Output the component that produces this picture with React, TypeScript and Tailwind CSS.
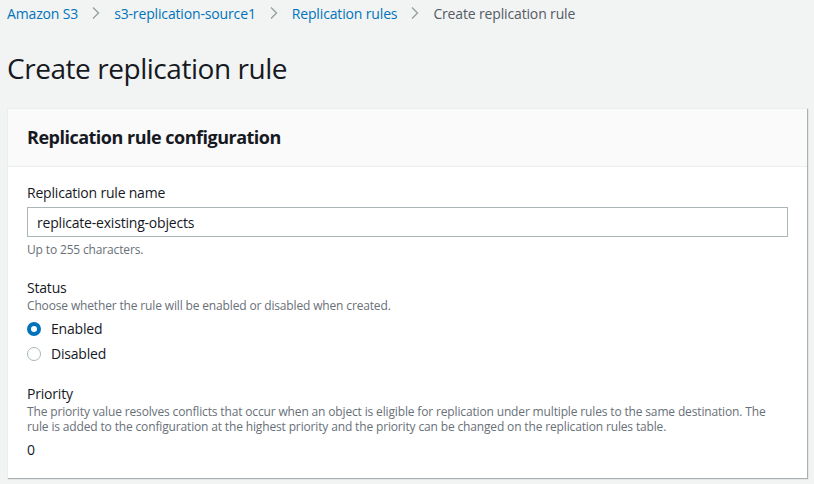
import React from "react";

const Chevron: React.FC = () => (
  <svg width="16" height="16" viewBox="0 0 16 16" className="mx-[10px] shrink-0">
    <path d="M5 2.5l5.5 5.5-5.5 5.5" fill="none" stroke="#95a1a2" strokeWidth="1.4" />
  </svg>
);

const Radio: React.FC<{ checked?: boolean; label: string }> = ({ checked, label }) => (
  <label className="flex items-center h-[25px]">
    {checked ? (
      <span className="w-[14px] h-[14px] rounded-full border-[4px] border-[#0073bb] bg-white" />
    ) : (
      <span className="w-[14px] h-[14px] rounded-full border border-[#aab7b8] bg-white" />
    )}
    <span className="ml-[10px] text-[14px] tracking-[-0.2px] text-[#16191f]">{label}</span>
  </label>
);

export default function App() {
  return (
    <div
      className="min-h-[484px] bg-[#f2f3f3] px-[7px] pb-[6px]"
      style={{ fontFamily: '"Open Sans", "Noto Sans", Arial, sans-serif' }}
    >
      {/* breadcrumbs */}
      <nav className="flex items-center h-[26px] text-[14px] tracking-[-0.15px]">
        <a className="text-[#0073bb]">Amazon S3</a>
        <Chevron />
        <a className="text-[#0073bb]">s3-replication-source1</a>
        <Chevron />
        <a className="text-[#0073bb]">Replication rules</a>
        <Chevron />
        <span className="text-[#545b64]">Create replication rule</span>
      </nav>

      <h1 className="mt-[24px] text-[28px] leading-[36px] tracking-[-0.45px] text-[#16191f]">
        Create replication rule
      </h1>

      <div className="mt-[22px] bg-white border-l border-t border-[#eaeded] shadow-[1px_1px_1px_0_rgba(0,28,36,0.3)]">
        <div className="h-[58px] bg-[#fafafa] border-b border-[#eaeded] flex items-center px-[19px]">
          <h2 className="text-[18px] font-bold tracking-[-0.5px] text-[#16191f]">Replication rule configuration</h2>
        </div>

        <div className="px-[19px] pt-[16px] pb-[18px]">
          <div className="text-[14px] tracking-[-0.2px] text-[#16191f] leading-[20px]">Replication rule name</div>
          <div className="mt-[4px] h-[30px] border border-[#aab7b8] flex items-center px-[9px] text-[14px] tracking-[-0.2px] text-[#16191f]">
            replicate-existing-objects
          </div>
          <div className="mt-[5px] text-[12px] leading-[16px] tracking-[-0.15px] text-[#687078]">Up to 255 characters.</div>

          <div className="mt-[20px] text-[14px] leading-[20px] tracking-[-0.2px] text-[#16191f]">Status</div>
          <div className="text-[12px] leading-[16px] tracking-[-0.15px] text-[#687078]">
            Choose whether the rule will be enabled or disabled when created.
          </div>
          <div className="mt-[2px]">
            <Radio checked label="Enabled" />
            <Radio label="Disabled" />
          </div>

          <div className="mt-[18px] text-[14px] leading-[20px] tracking-[-0.2px] text-[#16191f]">Priority</div>
          <div className="text-[12px] leading-[15px] tracking-[-0.15px] text-[#687078]">
            The priority value resolves conflicts that occur when an object is eligible for replication under multiple
            rules to the same destination. The rule is added to the configuration at the highest priority and the
            priority can be changed on the replication rules table.
          </div>
          <div className="mt-[6px] text-[14px] leading-[20px] text-[#16191f]">0</div>
        </div>
      </div>
    </div>
  );
}
